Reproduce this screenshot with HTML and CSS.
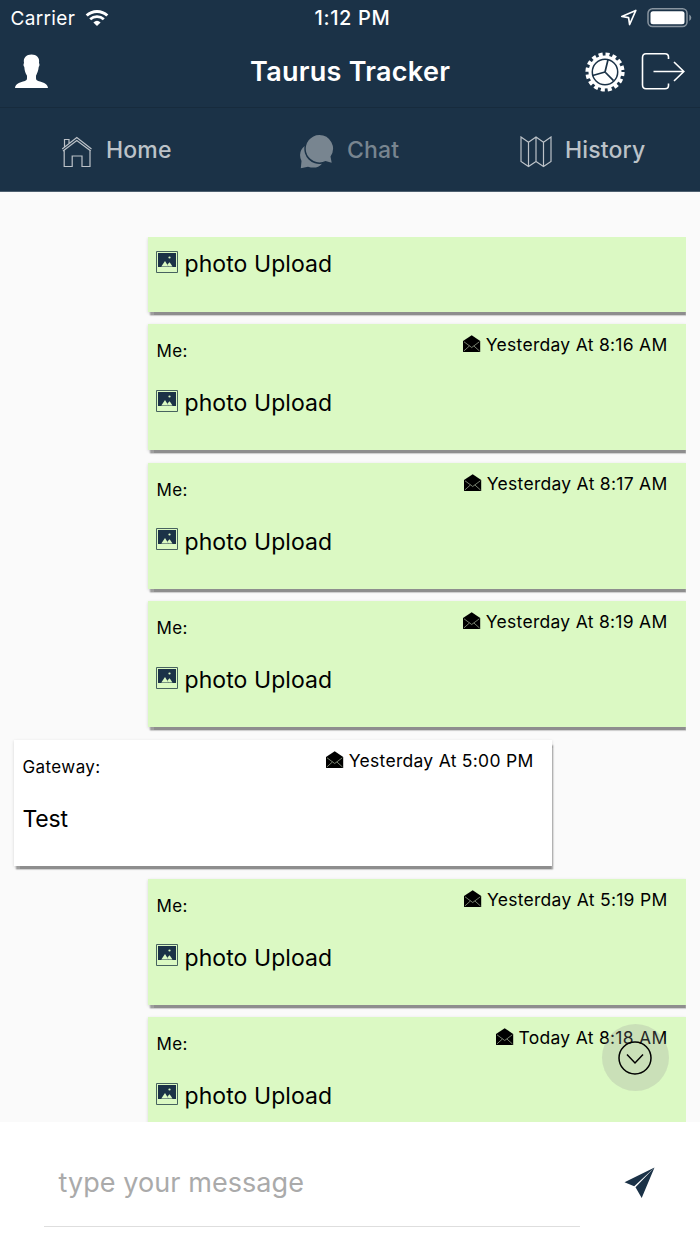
FILE: index.html
```html
<!DOCTYPE html>
<html lang="en">
<head>
<meta charset="utf-8">
<title>Taurus Tracker</title>
<link rel="stylesheet" href="styles.css">
</head>
<body>
<svg class="defs" width="0" height="0">
  <symbol id="photo" viewBox="0 0 22 22"><path d="M.5.5h21v21H.5z" fill="none" stroke="#47635f"/><path d="M2 2h18v14H2z" fill="#1b3247"/><path d="M5.3 15.600 9 10l3.400 5.600zM12.500 15.600l-1-2 2-2.300 1 1.200 2 3.100z" fill="#dbf9c3"/><circle cx="13.500" cy="6.500" r="1.100" fill="#dbf9c3"/></symbol>
  <symbol id="mail" viewBox="0 0 18 18"><path d="M0 6 8.700.3 17.200 6v11H0z"/><path d="m1 6.800 7.700 5.700 7.600-5.700M.8 16l5.600-5M16.500 16l-5.600-5" fill="none" stroke="currentColor" stroke-width=".7"/></symbol>
</svg>
<div class="app">
  <header class="top">
    <div class="status">
      <span class="carrier">Carrier</span>
      <svg class="wifi" width="24" height="18" viewBox="0 0 24 18"><path d="M1.700 6.500a15 15 0 0 1 20.600 0" fill="none" stroke="#fff" stroke-width="3"/><path d="M5.200 10.200a10 10 0 0 1 13.600 0" fill="none" stroke="#fff" stroke-width="2.800"/><path d="M8.400 13.400a5.400 5.400 0 0 1 7.200 0L12 17z" fill="#fff"/></svg>
      <span class="clock">1:12 PM</span>
      <svg class="indicators" width="72" height="22" viewBox="0 0 72 22"><path d="m1.800 8.500 14-6-6.200 14-1-6.900z" fill="none" stroke="#fff" stroke-width="1.700" stroke-linejoin="round"/><rect x="28" y=".8" width="39" height="17.800" rx="4.500" fill="none" stroke="#8995a0" stroke-width="1.500"/><rect x="30.500" y="3.200" width="34" height="13" rx="2.500" fill="#fff"/><path d="M69.300 6.500q2 1.200 2 3.200t-2 3.200z" fill="#8995a0"/></svg>
    </div>
    <div class="titlebar">
      <svg class="person" width="34" height="36" viewBox="0 0 34 36"><path d="M0 35c.4-4 4-5.500 8-6.500 3-.8 4-1.500 4-3.300v-2.500C10 19.500 9.700 17.500 9.300 14 8.300 13 8.300 11 9 10 8 4.500 11.500 1.500 16.500 1.500S25 4.500 24 10c.7 1 .7 3-.3 4-.4 3.500-1.200 5.500-2.700 8.700v2.500c0 1.800 1 2.500 4 3.300 4 1 7.600 2.500 8 6.500z" fill="#fff"/></svg>
      <h1 class="title">Taurus Tracker</h1>
      <svg class="gear" width="40" height="40" viewBox="-20 -20 40 40"><circle r="16.500" fill="#fff"/><circle r="17.500" fill="none" stroke="#fff" stroke-width="4.200" stroke-dasharray="4 2.872"/><circle r="12.700" fill="none" stroke="#1b3247" stroke-width="1.500"/><path d="M0 0 3-12.300M0 0-12.300 3.500M0 0 8.500 8.700" fill="none" stroke="#1b3247" stroke-width="1.700"/></svg>
      <svg class="exit" width="46" height="40" viewBox="0 0 46 40"><path d="M27.500 8V6q0-3.300-3.500-3.300H5Q1.500 2.700 1.500 6.700v27Q1.500 37.700 5 37.700h19q3.500 0 3.500-3.300v-2M12.500 20.500H42M33 11l9.800 9.500L33 30" fill="none" stroke="#fff" stroke-width="1.600"/></svg>
    </div>
    <nav class="tabs">
      <div class="tab home">
        <svg width="32" height="32" viewBox="0 0 32 32"><path d="M3.200 14V30.500H11.200V20H21v10.500h8V14M1.200 13 15.800 1.500 30.500 13M2 15l13.800-10.500L29.800 15M3.500 11V3.500H8v4" fill="none" stroke="#bcc2c8" stroke-width="1.200"/></svg>
        <span>Home</span>
      </div>
      <div class="tab chat">
        <svg width="34" height="34" viewBox="0 0 34 34"><path d="M19.300 0a13.700 13.700 0 1 0 6.200 26l6.200 1.700-1.200-6.200A13.700 13.700 0 0 0 19.300 0z"/><path d="M4.600 11A15 15 0 0 0 22 28.700Q17 34.500 8 31.700L.8 33.200 1.500 26Q-2.500 17 4.600 11z"/></svg>
        <span>Chat</span>
      </div>
      <div class="tab history">
        <svg width="32" height="32" viewBox="0 0 32 32"><path d="M1 1 8.500 6.200 16 1l7.500 5.200L31 1v24.500L23.500 30.500 16 25.500 8.500 30.500 1 25.500zM8.500 6.200v24.300M16 1v24.500M23.500 6.200v24.300" fill="none" stroke="#bcc2c8" stroke-width="1.200"/></svg>
        <span>History</span>
      </div>
    </nav>
  </header>
  <main class="feed">
    <article class="card mine partial"><p class="body"><svg class="photo"><use href="#photo"/></svg>photo Upload</p></article>
    <article class="card mine">
      <div class="meta"><span class="from">Me:</span><span class="when"><svg class="mail"><use href="#mail"/></svg><time>Yesterday At 8:16 AM</time></span></div>
      <p class="body"><svg class="photo"><use href="#photo"/></svg>photo Upload</p>
    </article>
    <article class="card mine">
      <div class="meta"><span class="from">Me:</span><span class="when"><svg class="mail"><use href="#mail"/></svg><time>Yesterday At 8:17 AM</time></span></div>
      <p class="body"><svg class="photo"><use href="#photo"/></svg>photo Upload</p>
    </article>
    <article class="card mine">
      <div class="meta"><span class="from">Me:</span><span class="when"><svg class="mail"><use href="#mail"/></svg><time>Yesterday At 8:19 AM</time></span></div>
      <p class="body"><svg class="photo"><use href="#photo"/></svg>photo Upload</p>
    </article>
    <article class="card theirs">
      <div class="meta"><span class="from">Gateway:</span><span class="when"><svg class="mail"><use href="#mail"/></svg><time>Yesterday At 5:00 PM</time></span></div>
      <p class="body">Test</p>
    </article>
    <article class="card mine">
      <div class="meta"><span class="from">Me:</span><span class="when"><svg class="mail"><use href="#mail"/></svg><time>Yesterday At 5:19 PM</time></span></div>
      <p class="body"><svg class="photo"><use href="#photo"/></svg>photo Upload</p>
    </article>
    <article class="card mine">
      <div class="meta"><span class="from">Me:</span><span class="when"><svg class="mail"><use href="#mail"/></svg><time>Today At 8:18 AM</time></span></div>
      <p class="body"><svg class="photo"><use href="#photo"/></svg>photo Upload</p>
    </article>
    <div class="jump"><svg width="34" height="34" viewBox="0 0 34 34"><circle cx="17" cy="17" r="16" /><path d="m9 13.500 8 8.500 8-8.500"/></svg></div>
  </main>
  <footer class="composer">
    <div class="field">type your message</div>
    <svg class="send" width="32" height="32" viewBox="0 0 32 32"><path d="M30.500.5.500 15.300l9.700 4zM30.500.5l-19 19.700 6.200 10.800z" fill="#1b3247"/></svg>
  </footer>
</div>
</body>
</html>
```

FILE: styles.css
```css
* { box-sizing: border-box; }
body { margin: 0; font-family: Inter, "Liberation Sans", sans-serif; color: #000; }
svg { display: block; flex: none; }
.defs { position: absolute; }
.app { width: 700px; height: 1244px; display: flex; flex-direction: column; background: #fafafa; overflow: hidden; }
.top { height: 192px; flex: none; background: #1b3247; color: #fff; border-bottom: 1px solid #4d5f6f; }
.status { height: 36px; display: grid; grid-template-columns: 74px 240px 285px 72px; align-items: center; padding-left: 10.500px; font-size: 19px; line-height: 37px; white-space: nowrap; }
.carrier { letter-spacing: .35px; }
.wifi { margin-top: -1px; }
.clock { font-size: 20px; font-weight: 500; letter-spacing: .65px; grid-column: 3; margin-left: -10px; }
.indicators { margin-top: 1px; margin-left: 10px; }
.titlebar { height: 72px; display: grid; grid-template-columns: 235px 335px 56px 46px; align-items: center; padding-left: 15px; border-bottom: 1px solid #172b3d; }
.titlebar .person { margin-bottom: 1px; }
.title { margin: 1px 0 0; font-size: 27px; font-weight: 600; line-height: 34px; letter-spacing: .28px; white-space: nowrap; }
.titlebar .exit { margin-top: -1px; }
.tabs { height: 83px; display: grid; grid-template-columns: 239px 220px 180px; padding-left: 61px; font-size: 23px; font-weight: 500; }
.tab { display: flex; align-items: center; gap: 13px; color: #bcc2c8; letter-spacing: .15px; }
.tab svg { margin-top: 4px; }
.tab span { margin-top: 0; }
.chat { color: #788590; fill: #788590; }
.feed { width: 686px; height: 885px; margin-top: 45px; padding-left: 14px; flex: none; display: flex; flex-direction: column; gap: 12.600px; overflow: hidden; }
.card { width: 538px; height: 126px; flex: none; padding: 10px 19px 0 9px; background: #fff; box-shadow: 1.500px 4px 1.500px -.5px #8e8e8e, 0 1px 3px rgba(0, 0, 0, .15); }
.mine { align-self: flex-end; background: #dbf9c3; }
.partial { height: 74.700px; clip-path: inset(0 -5px -6px -5px); }
.meta { height: 52px; display: flex; justify-content: space-between; font-size: 17.500px; line-height: 22px; letter-spacing: .28px; }
.from { padding-top: 6px; margin-left: -.5px; font-size: 17px; letter-spacing: .4px; }
.when { display: flex; gap: 5px; margin-right: -.5px; }
.mail { width: 18px; height: 18px; margin-top: 1px; color: #a8b59c; fill: #000; }
.body { margin: 0 0 0 -.5px; height: 34px; display: flex; align-items: center; font-size: 23px; line-height: 34px; letter-spacing: .08px; }
.photo { width: 22px; height: 22px; margin: -5px 6.500px 0 -.5px; }
.theirs .body { letter-spacing: -.2px; }
.jump { position: absolute; left: 602px; top: 1024px; width: 67px; height: 67px; display: grid; place-items: center; border-radius: 50%; background: rgba(150, 150, 150, .25); }
.jump svg { margin-left: -1px; fill: none; stroke: #000; stroke-width: 1.500px; }
.composer { height: 122px; flex: none; display: flex; background: #fff; padding-left: 44px; }
.field { width: 536px; height: 105px; padding: 16px 14.500px 0; border-bottom: 1px solid #dedede; color: #aaa; font-size: 27px; line-height: 90px; letter-spacing: .07px; }
.send { margin: 45px 0 0 44px; }
```
